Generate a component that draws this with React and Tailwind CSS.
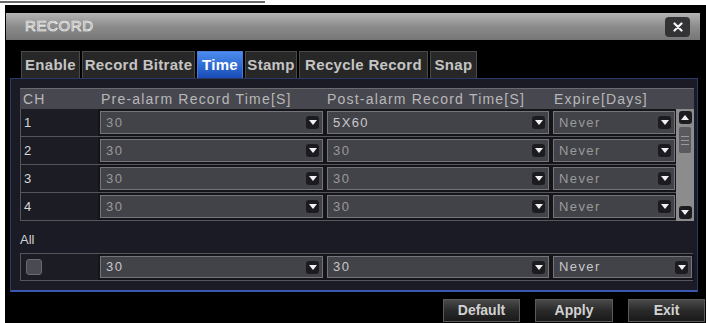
import React from 'react';

const Arrow = ({ up = false }) => (
  <span className="flex h-[13px] w-[13px] shrink-0 items-center justify-center rounded-[3px] bg-[#1c1c20]">
    <svg width="8" height="5" viewBox="0 0 8 5">
      <path d={up ? 'M0 5h8L4 0z' : 'M0 0h8L4 5z'} fill="#f2f2f2" />
    </svg>
  </span>
);

const Select = ({ value, bright = false }) => (
  <div className="flex h-full items-center justify-between border border-[#74747a] bg-[#424249] pl-[5px] pr-[3px]">
    <span className={`text-[13px] tracking-[1.4px] ${bright ? 'text-[#c8c8c8]' : 'text-[#9a9a9a]'}`}>{value}</span>
    <Arrow />
  </div>
);

const tabs = [
  { label: 'Enable', w: 'w-[59px]' },
  { label: 'Record Bitrate', w: 'w-[113px]' },
  { label: 'Time', w: 'w-[46px]', active: true },
  { label: 'Stamp', w: 'w-[52px]' },
  { label: 'Recycle Record', w: 'w-[129px]' },
  { label: 'Snap', w: 'w-[47px]' },
];

const rows = [
  { ch: '1', pre: '30', post: '5X60', exp: 'Never' },
  { ch: '2', pre: '30', post: '30', exp: 'Never' },
  { ch: '3', pre: '30', post: '30', exp: 'Never' },
  { ch: '4', pre: '30', post: '30', exp: 'Never' },
];

const Btn = ({ children, w }) => (
  <button
    type="button"
    className={`${w} h-[23px] border border-[#5a5a5a] bg-gradient-to-b from-[#4a4a4a] via-[#2a2a2a] to-[#1a1a1a] text-[14px] font-bold text-[#d2d2d2]`}
  >
    {children}
  </button>
);

export default function App() {
  return (
    <div className="relative flex h-[323px] w-[706px] flex-col overflow-hidden bg-white font-['Liberation_Sans',Arial,sans-serif]">
      {/* top strip */}
      <div className="h-[5px] shrink-0">
        <div className="mt-[1px] h-[2px] w-[265px] bg-[#6a6a6a]" />
      </div>

      <div className="ml-[5px] flex flex-1 flex-col bg-black">
        {/* title bar */}
        <div className="ml-[1px] mr-[6px] mt-[8px] flex h-[27px] items-center justify-between bg-gradient-to-b from-[#b4b4b4] via-[#8c8c8c] to-[#767676] pl-[19px] pr-[10px]">
          <span className="text-[15px] tracking-[0.6px] text-[#8a8a8a] [-webkit-text-stroke:0.7px_#f4f4f4]">RECORD</span>
          <span className="flex h-[20px] w-[25px] items-center justify-center rounded-[4px] bg-[#333336]">
            <svg width="10" height="10" viewBox="0 0 10 10">
              <path d="M1.5 1.5l7 7M8.5 1.5l-7 7" stroke="#f4f4f4" strokeWidth="2.2" strokeLinecap="round" />
            </svg>
          </span>
        </div>

        {/* tabs */}
        <div className="mt-[11px] flex h-[27px] gap-[2px] pl-[16px]">
          {tabs.map((t) => (
            <div
              key={t.label}
              className={`${t.w} flex items-center justify-center whitespace-nowrap border border-b-0 text-[15px] font-bold tracking-[0.3px] ${
                t.active
                  ? 'border-[#4a7ad8] bg-gradient-to-b from-[#4a8cf0] to-[#1a4cb8] text-white'
                  : 'border-[#4a4a4a] bg-[#272727] text-[#c4c4c4]'
              }`}
            >
              {t.label}
            </div>
          ))}
        </div>

        {/* panel */}
        <div className="ml-[5px] w-[688px] border border-b-2 border-[#2c3966] border-b-[#3a58b0] bg-[#1a1b25] pb-[9px] pl-[9px] pr-[3px] pt-[9px]">
          <div className="border-t border-[#6a6a70]">
            {/* header */}
            <div className="grid h-[20px] grid-cols-[77px_227px_226px_126px_18px] items-center whitespace-nowrap bg-[#47474f] text-[14px] tracking-[1.2px] text-[#b8b8b8]">
              <span className="pl-[3px]">CH</span>
              <span className="pl-[4px]">Pre-alarm Record Time[S]</span>
              <span className="pl-[3px]">Post-alarm Record Time[S]</span>
              <span className="pl-[4px]">Expire[Days]</span>
              <span />
            </div>

            <div className="flex">
              <div className="w-[656px]">
                {rows.map((r) => (
                  <div key={r.ch} className="grid h-[28px] grid-cols-[77px_227px_226px_126px] border-b border-l border-[#55555c]">
                    <div className="bg-[#1c1c24] pl-[3px] pt-[4px] text-[13px] text-[#d8d8d8]">{r.ch}</div>
                    <div className="bg-[#141419] p-[2px]">
                      <Select value={r.pre} />
                    </div>
                    <div className="bg-[#141419] p-[2px]">
                      <Select value={r.post} bright={r.post !== '30'} />
                    </div>
                    <div className="bg-[#141419] p-[2px]">
                      <Select value={r.exp} />
                    </div>
                  </div>
                ))}
              </div>
              {/* scrollbar */}
              <div className="flex h-[112px] w-[18px] flex-col items-center justify-between bg-[#8c8c8c] py-[2px]">
                <div className="flex flex-col items-center gap-[3px]">
                  <Arrow up />
                  <div className="flex h-[26px] w-[12px] flex-col justify-center gap-[3px] rounded-[2px] bg-[#5a5a5e] px-[2px]">
                    <div className="h-[1px] bg-[#9a9a9a]" />
                    <div className="h-[1px] bg-[#9a9a9a]" />
                    <div className="h-[1px] bg-[#9a9a9a]" />
                  </div>
                </div>
                <Arrow />
              </div>
            </div>
          </div>

          {/* All */}
          <div className="flex h-[32px] items-center pt-[6px] text-[13px] text-[#d4d4d4]">All</div>
          <div className="grid h-[28px] w-[673px] grid-cols-[77px_227px_226px_143px] border border-[#55555c]">
            <div className="flex items-center bg-[#1c1c24] pl-[5px]">
              <span className="h-[16px] w-[16px] rounded-[3px] border border-[#6a6a70] bg-[#4a4a52]" />
            </div>
            <div className="bg-[#141419] p-[2px]">
              <Select value="30" bright />
            </div>
            <div className="bg-[#141419] p-[2px]">
              <Select value="30" bright />
            </div>
            <div className="bg-[#141419] p-[2px]">
              <Select value="Never" bright />
            </div>
          </div>
        </div>

        {/* buttons */}
        <div className="mt-[7px] flex justify-end gap-[15px] pr-[1px]">
          <Btn w="w-[77px]">Default</Btn>
          <Btn w="w-[78px]">Apply</Btn>
          <Btn w="w-[77px]">Exit</Btn>
        </div>
      </div>
    </div>
  );
}
